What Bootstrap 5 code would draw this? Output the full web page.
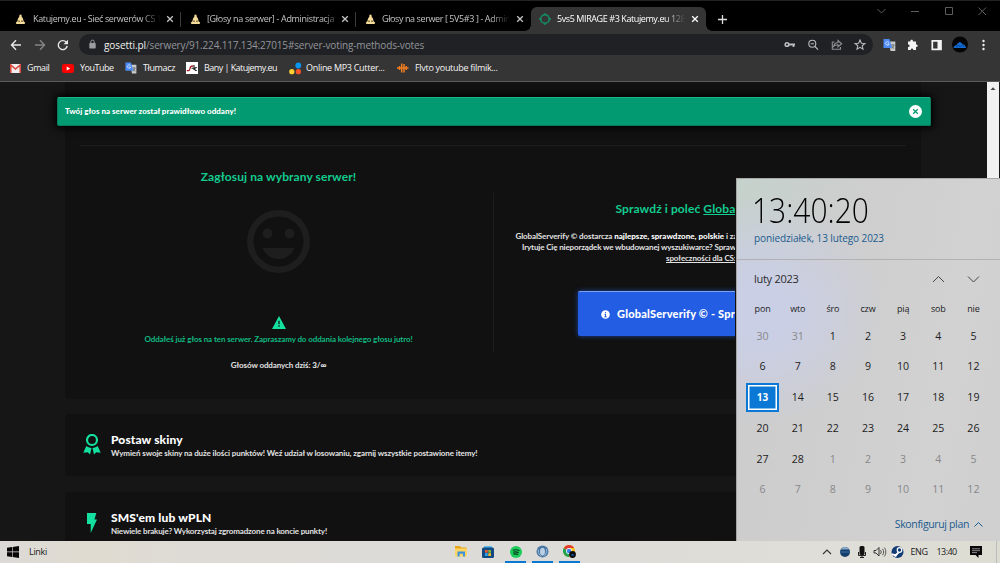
<!DOCTYPE html>
<html lang="pl">
<head>
<meta charset="utf-8">
<meta name="viewport" content="width=device-width, initial-scale=1">
<title>5vs5 MIRAGE #3 Katujemy.eu</title>
<link href="https://cdn.jsdelivr.net/npm/bootstrap@5.3.0/dist/css/bootstrap.min.css" rel="stylesheet">
<script src="https://cdn.jsdelivr.net/npm/bootstrap@5.3.0/dist/js/bootstrap.bundle.min.js"></script>
<style>
body{width:1000px;height:563px;overflow:hidden;background:#161616;font:9px/12px "Open Sans","Noto Sans",sans-serif;color:#ddd;white-space:nowrap}
svg{display:block;flex:none}
/* browser chrome */
.tabstrip{height:31px;background:#000;border-top:1px solid #222;padding-top:6px;padding-left:6px}
.b-tab{width:175px;height:24px;padding:0 7px 0 9px;color:#c4c4c4;position:relative}
.b-tab .ttl{flex:1;margin-left:6px;overflow:hidden;letter-spacing:-.36px;-webkit-mask-image:linear-gradient(90deg,#000 108px,transparent 128px)}
.b-tab .ttl.late{-webkit-mask-image:linear-gradient(90deg,#000 116px,transparent 134px)}
.b-tab.sep::after{content:"";position:absolute;right:0;top:5px;width:1px;height:15px;background:#3a3a3a}
.b-tab.on{background:#353535;color:#fff;border-radius:6px 6px 0 0;padding-left:8px}
.b-tab.on::before,.b-tab.on::after{content:"";position:absolute;bottom:0;width:6px;height:6px}
.b-tab.on::before{left:-6px;background:radial-gradient(circle at 0 0,#000 5.5px,#353535 6px)}
.b-tab.on::after{right:-6px;background:radial-gradient(circle at 100% 0,#000 5.5px,#353535 6px)}
.toolbar{height:27px;background:#353535;padding:3px 0 3px 10px}
.omnibox{width:794px;height:21px;margin-left:10px;border-radius:11px;background:#202124;font-size:10px;color:#92959a;padding:0 6px 0 9px}
.host{color:#f1f1f1;letter-spacing:-.075px;margin-left:7px}
.urlpath{letter-spacing:-.151px}
.bookmarks{height:24px;background:#353535;border-bottom:1px solid #5a5a5a;padding-left:10px;color:#f4f4f4}
.bookmarks>div{gap:6px;height:20px}
/* page */
.site{height:459px;background:#161616;overflow:hidden;font-family:Lato,"Noto Sans",sans-serif;font-size:8px;font-weight:700;position:relative}
.wrap{width:856px;margin-left:65px}
.panel{background:#111}
.main-panel{height:317px;padding:63px 15px 0;border-radius:0 0 4px 4px}
.rule{height:1px;background:#1e1e1e}
.col-vote{width:429px;margin-left:-16px}
.col-promo{height:160px;margin-top:47px;border-left:1px solid #1d1d1d;width:242px;overflow:hidden}
.accent{color:#13cc8f}
.ttl-lg{font-size:12px;line-height:16px;letter-spacing:.1px}
.txt{letter-spacing:-.1px;line-height:11px;color:#e2e2e2}
.promo-btn{width:258px;height:45px;margin:27px 0 0 84px;border:0;border-top:1px solid #7d9ff0;border-radius:2px;background:#235de4;box-shadow:0 0 5px #235de4aa;color:#fff;font-size:11px;font-weight:900;letter-spacing:.2px;padding-left:23px;gap:7px}
.toastbar{position:absolute;left:57px;top:15px;width:873.5px;height:28.5px;background:#029a70;border:1px solid #087d5c;border-top-color:#19b488;border-radius:2px;box-shadow:0 0 9px 2px #000;color:#fff;font-weight:900;letter-spacing:.025px;padding:0 8px 0 7px}
.offer{height:62px;border-radius:4px;padding-left:46px;padding-top:17px;position:relative}
.offer+.offer{margin-top:15px}
.offer svg{position:absolute}
.offer b{display:block;font-size:12px;line-height:17px;letter-spacing:.1px;color:#fff}
.scrollbar{position:absolute;right:1px;top:0;width:12px;height:459px;background:#f1f1f1}
/* taskbar */
.taskbar{height:22px;background:linear-gradient(90deg,#dcdad7,#e0dbd0 9%,#dedbd6 18%,#dcdbd7 50%,#dfded8 85%,#dcdcd2);color:#1a1a1a;position:relative}
.app{width:27px;height:22px;padding-bottom:1px}
.app.run{background:linear-gradient(#0a78d0,#0a78d0) center bottom/21px 2px no-repeat}
.tray{position:absolute;left:822px;top:0;height:22px;width:178px}
/* clock flyout */
.flyout{position:absolute;left:736px;top:178px;width:264px;height:363px;color:#1c1c1c;border-left:1px solid #a5a5a5;border-top:1px solid #aaa;background:radial-gradient(ellipse 125px 115px at 22px 132px,#cacfe5 25%,#cacfe200 100%),radial-gradient(ellipse 130px 130px at 0 0,#c5d2cc,#cad1cd00 100%),linear-gradient(100deg,#cccccd,#cfcfcf 50%,#d2d2d2 75%,#cfcfd0)}
.bigclock{font-size:34px;font-weight:300;line-height:38px;color:#000;transform:scaleX(.881);transform-origin:0 0;margin:12px 0 0 15px}
.days{display:grid;grid-template-columns:repeat(7,35.15px);margin-left:8px;text-align:center}
.days div{height:30.8px;line-height:30.8px;font-size:10.6px}
.days .wd{height:25px;line-height:25px;font-size:9px;letter-spacing:-.15px}
.days .off{color:#87878a}
.days .today{margin:1px 1.2px;height:28.5px;line-height:22.5px;border:2px solid #0a78d4;background:#0a78d4;box-shadow:inset 0 0 0 1.5px #fff;color:#fff;font-weight:700;font-size:10px;padding-top:1px}
.blue{color:#1b5b8e}
</style>
</head>
<body>
<svg width="0" height="0" style="position:absolute">
 <defs>
  <symbol id="close" viewBox="0 0 8 8"><path d="M1.2 1.2l5.6 5.6M6.8 1.2L1.2 6.8" stroke="currentColor" stroke-width="1.3"/></symbol>
  <symbol id="bell" viewBox="0 0 10 10"><path d="M5 .5C6 .5 6.200 1.800 6.100 2.800 7.300 3.800 7.500 5 7.700 6.300L9.300 8 8.700 9.200H1.300L.7 8 2.300 6.300C2.500 5 2.700 3.800 3.900 2.800 3.800 1.800 4 .5 5 .5z" fill="#f5dc9a"/><path d="M3.100 6h1.100v1.300H3.100zM5.800 6h1.100v1.300H5.800z" fill="#4a3a1c"/></symbol>
  <symbol id="translate" viewBox="0 0 13 13"><path d="M6 3h6.300v9.500H7.500z" fill="#c8cacc"/><path d="M8 6.500h3.500M9.800 5.500v1M11 6.500c-.4 2-1.500 3-2.500 3.500M8.800 7.500c.6 1.300 1.500 2 2.500 2.500" stroke="#666" stroke-width=".8" fill="none"/><path d="M.5.500h6L9 9.500H.5z" fill="#4c8bf5"/><path d="M6 4a1.800 1.800 0 1 0 .2 1.400H4.500" stroke="#dbe7ff" stroke-width=".9" fill="none"/></symbol>
 </defs>
</svg>
<div class="d-flex flex-column">
 <header>
  <div class="tabstrip d-flex position-relative">
   <div class="b-tab sep d-flex align-items-center"><svg width="11" height="11"><use href="#bell"/></svg><span class="ttl" style="letter-spacing:-.363px;margin-left:7px">Katujemy.eu - Sieć serwerów CS 1</span><svg width="8" height="8"><use href="#close"/></svg></div>
   <div class="b-tab sep d-flex align-items-center"><svg width="11" height="11"><use href="#bell"/></svg><span class="ttl late" style="letter-spacing:-.32px">[Głosy na serwer] - Administracja</span><svg width="8" height="8"><use href="#close"/></svg></div>
   <div class="b-tab d-flex align-items-center"><svg width="11" height="11"><use href="#bell"/></svg><span class="ttl" style="letter-spacing:-.4px">Głosy na serwer [ 5V5#3 ] - Admin</span><svg width="8" height="8"><use href="#close"/></svg></div>
   <div class="b-tab on d-flex align-items-center"><svg width="12" height="12" viewBox="0 0 12 12"><circle cx="6" cy="6" r="4.300" fill="none" stroke="#129068" stroke-width="1.500"/><path d="M6 0v2.300M6 9.700V12M0 6h2.300M9.700 6H12" stroke="#129068" stroke-width="1.300"/></svg><span class="ttl" style="letter-spacing:-.41px">5vs5 MIRAGE #3 Katujemy.eu 128</span><svg width="8" height="8"><use href="#close"/></svg></div>
   <svg width="9" height="9" viewBox="0 0 9 9" style="margin:8px 0 0 12px"><path d="M4.500 0v9M0 4.500h9" stroke="#ddd" stroke-width="1.300"/></svg>
   <svg class="position-absolute end-0 top-0" width="130" height="22" viewBox="870 1 130 22" fill="none" stroke="#5d5d5d"><path d="M877.500 9l4 4 4-4M911 11.500h8M945.500 7.500h7v7h-7zM978.500 7.500l7.500 7.500M986 7.500l-7.500 7.500"/></svg>
  </div>
  <div class="toolbar d-flex align-items-center">
   <svg width="59" height="14" viewBox="10 38 59 14" fill="none" stroke="#e8e8e8" stroke-width="1.400"><path d="M21 45h-9.500M16 40.300L11.500 45l4.500 4.700"/><path d="M35 45h9.500M40 40.300l4.500 4.700-4.500 4.700" stroke="#858585"/><path d="M66.300 42.300A4.500 4.500 0 1 0 67.200 46"/><path d="M68 39.700v4.500h-4.500z" fill="#e8e8e8" stroke="none"/></svg>
   <div class="omnibox d-flex align-items-center">
    <svg width="9" height="11" viewBox="0 0 9 11"><rect x="1.300" y="4" width="6.400" height="5.500" rx=".7" fill="#9a9da2"/><path d="M2.800 4V2.800a1.700 1.700 0 0 1 3.400 0V4" fill="none" stroke="#9a9da2"/></svg>
    <span class="host">gosetti.pl</span><span class="urlpath">/serwery/91.224.117.134:27015#server-voting-methods-votes</span>
    <svg class="ms-auto" width="84" height="14" viewBox="783 38 84 14" fill="none" stroke="#b9bbbf" stroke-width="1.100"><circle cx="787" cy="44.500" r="1.800" stroke-width="1.600"/><path d="M789 44.500h6M793.500 45v2" stroke-width="1.800"/><circle cx="812.300" cy="43.800" r="3.500"/><path d="M815 46.500l3 3.200M810.700 43.800h3.200"/><path d="M834.500 42h-2.200v7.300h8.200V47M833.500 46.500c.5-2.500 2-3.700 4.500-4v-2l3.700 3.300-3.700 3v-2c-2 0-3.300.4-4.500 1.700z" stroke="#8e9095"/><path d="M860 40l1.400 3.200 3.500.3-2.700 2.300.8 3.400-3-1.800-3 1.800.8-3.400-2.700-2.300 3.500-.3z"/></svg>
   </div>
   <svg width="127" height="21" viewBox="873 34 127 21"><svg x="883" y="38.500" width="13" height="13"><use href="#translate"/></svg><path d="M908 41.500h2.300c-.3-2.300 3-2.300 2.700 0h3v3c2.300-.3 2.300 2.700 0 2.400v3.200h-2.700c0-2.200-2.600-2.200-2.600 0H908v-3c2.200 0 2.200-2.600 0-2.600z" fill="#f4f4f4"/><path d="M932.300 40.800h8.500v8.500h-8.500z" fill="none" stroke="#f4f4f4" stroke-width="1.700"/><path d="M937.500 40h4v10h-4z" fill="#f4f4f4"/><circle cx="960" cy="44.500" r="8" fill="#050505"/><path d="M953.500 48c.3-2 2-2.700 3-3 .5-1.500 2-2.200 3.500-3 1.300.5 1.700 1.200 2.500 2 1.800.5 3.200 1.500 3.700 4z" fill="#126ad2"/><path d="M956 46.500l2.500-1 2 1 2-1.500 2 1.500" stroke="#073a80" fill="none" stroke-width=".8"/><circle cx="983.500" cy="41" r="1.200" fill="#eee"/><circle cx="983.500" cy="45" r="1.200" fill="#eee"/><circle cx="983.500" cy="49" r="1.200" fill="#eee"/></svg>
  </div>
  <div class="bookmarks d-flex">
   <div class="d-flex align-items-center" style="width:52px;letter-spacing:-.384px"><svg width="11" height="9" viewBox="0 0 11 9"><path d="M0 0h11v9H0z" fill="#f3eeee"/><path d="M.8 9V1l4.700 4 4.700-4v8" fill="none" stroke="#d8453a" stroke-width="1.500"/></svg>Gmail</div>
   <div class="d-flex align-items-center" style="width:63px;letter-spacing:-.5px"><svg width="12" height="9" viewBox="0 0 12 9"><rect width="12" height="9" rx="2.200" fill="#f00"/><path d="M4.700 2.500v4l3.500-2z" fill="#fff"/></svg>YouTube</div>
   <div class="d-flex align-items-center" style="width:61px;letter-spacing:-.375px"><svg width="12" height="12"><use href="#translate"/></svg>Tłumacz</div>
   <div class="d-flex align-items-center" style="width:102px;letter-spacing:-.545px"><svg width="12" height="12" viewBox="0 0 12 12"><path d="M0 0h12v12H0z" fill="#fff"/><path d="M.8 8.700h2c1.700 0 .7-3 2-4.200.5-.5 1.500-.5 2.400-.5" fill="none" stroke="#a51b22" stroke-width="1.300"/><path d="M8 3v5M10.800 5.700c-2.500-1-2.800 3.300 0 2.800M5.500 6.200H9" fill="none" stroke="#222" stroke-width="1.100"/></svg>Bany | Katujemy.eu</div>
   <div class="d-flex align-items-center" style="width:108px;letter-spacing:-.295px"><svg width="13" height="13" viewBox="0 0 13 13" style="margin-left:1px;margin-right:-2px"><circle cx="9.300" cy="3.500" r="2.900" fill="#0a95f0"/><circle cx="2.800" cy="9.700" r="2.600" fill="#fdd02f"/><circle cx="9.400" cy="9.700" r="2.600" fill="#f5542b"/></svg>Online MP3 Cutter...</div>
   <div class="d-flex align-items-center" style="letter-spacing:-.302px"><svg width="12" height="12" viewBox="0 0 12 12" style="margin-left:1px"><path d="M2.500 4v4M4.700 1.500v9M7 2v8.500M9.200 4v4M0 6h11.500" stroke="#ee7d22" stroke-width="1.500"/></svg>Flvto youtube filmik...</div>
  </div>
 </header>

 <main class="site">
  <div class="wrap">
   <section class="panel main-panel">
    <div class="rule"></div>
    <div class="d-flex">
     <div class="col-vote text-center d-flex flex-column align-items-center">
      <div class="ttl-lg accent" style="margin-top:23px">Zagłosuj na wybrany serwer!</div>
      <svg width="63" height="63" viewBox="0 0 63 63" style="margin-top:25px"><circle cx="31.500" cy="31.500" r="28.200" fill="none" stroke="#1e1e1e" stroke-width="6.400"/><circle cx="20.500" cy="23.500" r="4.900" fill="#1e1e1e"/><circle cx="42.500" cy="23.500" r="4.900" fill="#1e1e1e"/><path d="M15.500 38h32c-2.500 6.500-8.500 11-16 11s-13.500-4.500-16-11z" fill="#1e1e1e"/></svg>
      <svg width="14" height="13" viewBox="0 0 14 13" style="margin-top:43px"><path d="M7 0l7 13H0z" fill="#14e0a0"/><path d="M7 4.800v3.400M7 9.300v1.500" stroke="#0c3325" stroke-width="1.500"/></svg>
      <div class="txt" style="color:#10b982;margin-top:5px">Oddałeś już głos na ten serwer. Zapraszamy do oddania kolejnego głosu jutro!</div>
      <div class="txt" style="margin-top:15px">Głosów oddanych dziś: <b style="font-weight:900">3/∞</b></div>
     </div>
     <div class="col-promo">
      <div class="ttl-lg accent" style="margin:8px 0 0 121.500px">Sprawdź i poleć <u>Globa</u></div>
      <div class="txt" style="margin:14px 0 0 21.500px">GlobalServerify © dostarcza <b style="font-weight:900;letter-spacing:.02px;color:#fff">najlepsze, sprawdzone, polskie</b> i za</div>
      <div class="txt" style="margin-left:28px;letter-spacing:-.138px">Irytuje Cię nieporządek we wbudowanej wyszukiwarce? Spraw</div>
      <div class="txt" style="margin-left:172px"><u>społeczności dla CS:</u></div>
      <div class="promo-btn d-flex align-items-center"><svg width="9" height="9" viewBox="0 0 9 9"><circle cx="4.500" cy="4.500" r="4.300" fill="#fff"/><path d="M4.500 2v1.200M4.500 4v3M3.500 4.300h1M3.300 6.800h2.400" stroke="#235de4" stroke-width="1"/></svg><span>GlobalServerify © - Spr</span></div>
     </div>
    </div>
   </section>
   <section class="panel offer" style="margin-top:15px">
    <svg width="18" height="21" viewBox="0 0 18 21" style="left:18px;top:20px"><circle cx="9" cy="6" r="5" fill="none" stroke="#14e0a0" stroke-width="2.200"/><path d="M3.300 12c1.500 1.200 3 1.700 5.200 1.900L7 20.500l-2.200-2.200L.3 18.800zM14.700 12c-1.500 1.200-3 1.700-5.200 1.900l1.500 6.600 2.200-2.200 4.500.5z" fill="#14e0a0"/></svg>
    <b>Postaw skiny</b><div class="txt">Wymień swoje skiny na duże ilości punktów! Weź udział w losowaniu, zgarnij wszystkie postawione itemy!</div>
   </section>
   <section class="panel offer" style="margin-top:15.500px">
    <svg width="10" height="20" viewBox="0 0 10 20" style="left:22px;top:21px"><path d="M0 0h9.300L7.500 6.500H10L3.700 20V11H0z" fill="#14e0a0"/></svg>
    <b style="letter-spacing:.145px">SMS'em lub wPLN</b><div class="txt" style="letter-spacing:-.143px">Niewiele brakuje? Wykorzystaj zgromadzone na koncie punkty!</div>
   </section>
  </div>
  <div class="toastbar d-flex align-items-center justify-content-between"><span>Twój głos na serwer został prawidłowo oddany!</span><svg width="13" height="13" viewBox="0 0 13 13"><circle cx="6.500" cy="6.500" r="6.500" fill="#fff"/><path d="M4.200 4.200l4.600 4.600M8.800 4.200L4.200 8.800" stroke="#079a70" stroke-width="1.300"/></svg></div>
  <div class="scrollbar"><svg width="12" height="12" viewBox="0 0 12 12"><path d="M3.500 8L6 5.300 8.500 8z" fill="#444"/></svg></div>
 </main>

 <footer class="taskbar d-flex align-items-center">
  <svg width="12" height="12" viewBox="0 0 12 12" style="margin-left:7px"><path d="M0 1.700L5 1v4.600H0zM5.600.9L12 0v5.600H5.600zM0 6.300h5V11L0 10.300zM5.600 6.300H12V12l-6.400-.9z" fill="#080808"/></svg>
  <span style="margin-left:10px;letter-spacing:-.3px">Linki</span>
  <div class="d-flex position-absolute top-0" style="left:447.500px">
   <div class="app d-flex align-items-center justify-content-center"><svg width="12" height="11" viewBox="0 0 12 11"><path d="M0 0h5l1 1.500h5.500V10H0z" fill="#e8a719"/><path d="M0 2.500h12v8H0z" fill="#fbd566"/><path d="M2.500 10.500V5.500h7.500v5H8V7.800H4.600v2.700z" fill="#3b93dc"/></svg></div>
   <div class="app d-flex align-items-center justify-content-center"><svg width="12" height="12" viewBox="0 0 12 12"><rect x="2" width="8" height="3" rx="1" fill="#56b9e8"/><rect y="1.500" width="12" height="10.500" rx="1.500" fill="#144a83"/><path d="M3 4h2.700v2.700H3z" fill="#ef5a30"/><path d="M6.300 4H9v2.700H6.300z" fill="#7fba3a"/><path d="M3 7.200h2.700V10H3z" fill="#28a8ea"/><path d="M6.300 7.200H9V10H6.300z" fill="#f8b825"/></svg></div>
   <div class="app run d-flex align-items-center justify-content-center" style="margin-left:.5px"><svg width="12" height="12" viewBox="0 0 12 12"><circle cx="6" cy="6" r="6" fill="#1dce5c"/><path d="M2.800 4.200c2.200-.7 4.600-.5 6.600.5M3.100 6.200c2-.5 3.900-.3 5.600.5M3.400 8.100c1.700-.4 3.200-.2 4.700.5" fill="none" stroke="#0c3a1d" stroke-width="1.100"/></svg></div>
   <div class="app run d-flex align-items-center justify-content-center"><svg width="13" height="13" viewBox="0 0 13 13"><circle cx="6.500" cy="6.500" r="6" fill="#4d7ba8"/><ellipse cx="6.500" cy="6.700" rx="3" ry="4.300" fill="#b7d0e6" stroke="#3f6c98"/><path d="M2.300 4.500c0 4 1 5.500 3 7M10.500 4c.5 3-.5 5.500-2.500 7.500" fill="none" stroke="#a9c2da" stroke-width=".8"/></svg></div>
   <div class="app run d-flex align-items-center justify-content-center"><svg width="13" height="13" viewBox="0 0 13 13"><circle cx="6" cy="6" r="6" fill="#fbc116"/><path d="M6 6v6A6 6 0 0 1 .8 3z" fill="#23a455"/><path d="M.8 3A6 6 0 0 1 11.200 3H6v3z" fill="#e33b2e"/><circle cx="6" cy="6" r="2.900" fill="#fff"/><circle cx="6" cy="6" r="2.200" fill="#3d7ff0"/><circle cx="9.500" cy="9.500" r="3.400" fill="#0a0a0a"/><path d="M7.500 10.500l2-1.800 2 1.800z" fill="#1669c8"/></svg></div>
  </div>
  <div class="tray d-flex align-items-center">
   <svg width="84" height="16" viewBox="822 544 84 16"><path d="M823 554l4-4 4 4" fill="none" stroke="#333" stroke-width="1.100"/><circle cx="845" cy="552" r="5" fill="#173e68"/><path d="M840.500 549.500a5 5 0 0 1 9 0z" fill="#86a9c8"/><path d="M840.500 552h9" stroke="#3977a9"/><rect x="859.500" y="546" width="5" height="9" rx="1.500" fill="#111"/><path d="M858.500 552v3.500h7V552M862 555v2.500M860 557.500h4" fill="none" stroke="#222"/><path d="M874 550.500h2l3-3v8.500l-3-3h-2z" fill="none" stroke="#222" stroke-width=".9"/><path d="M880.500 550c.8 1.200.8 2.700 0 4M882.500 548.800c1.500 2 1.500 4.400 0 6.400M884.300 547.500c2 2.700 2 6.200 0 9" fill="none" stroke="#333" stroke-width=".8"/><circle cx="897.500" cy="552" r="6" fill="#123c73"/><path d="M892 554l3.500 1.500 3-3" fill="none" stroke="#fff" stroke-width="1.800"/><circle cx="899.500" cy="550" r="2.300" fill="none" stroke="#fff" stroke-width="1.200"/><circle cx="895.300" cy="555.300" r="1.500" fill="#fff"/></svg>
   <span style="margin-left:4.500px;letter-spacing:-.44px">ENG</span><span style="margin-left:9px;letter-spacing:-.59px">13:40</span>
   <svg width="12" height="12" viewBox="0 0 12 12" style="margin-left:13px"><path d="M0 0h12v9H8.500v3L5.500 9H0z" fill="#080808"/><path d="M2 2.800h8M2 4.700h8M2 6.600h5" stroke="#aaa" stroke-width=".8"/></svg>
   <span style="margin-left:14px;width:1px;height:22px;background:#bbb"></span>
  </div>
 </footer>
</div>

<aside class="flyout">
 <div class="bigclock">13:40:20</div>
 <div class="blue" style="font-size:10px;line-height:14px;letter-spacing:-.095px;margin:2px 0 0 17px">poniedziałek, 13 lutego 2023</div>
 <div style="height:1px;background:#b2b2b3;margin-top:13.500px"></div>
 <div class="d-flex align-items-center" style="height:38px;padding-left:17px;font-size:11px;letter-spacing:-.276px;color:#2b2b2b">luty 2023<svg class="ms-auto" width="48" height="8" viewBox="0 0 48 8" style="margin-right:20px" fill="none" stroke="#444"><path d="M1 7l5.500-5.500L12 7M36 1.500L41.500 7 47 1.500"/></svg></div>
 <div class="days" id="days" style="margin-top:-2px"></div>
 <div class="blue d-flex align-items-center" style="position:absolute;right:17px;top:337px;font-size:10.500px;letter-spacing:-.35px;line-height:16px">Skonfiguruj plan<svg width="9" height="6" viewBox="0 0 9 6" style="margin-left:5px" fill="none" stroke="#1b5b8e"><path d="M.5 5.500l4-4 4 4"/></svg></div>
</aside>
<script>
const grid=document.getElementById('days');
const add=(text,cls)=>{const d=document.createElement('div');d.textContent=text;d.className=cls;grid.append(d)};
['pon','wto','śro','czw','pią','sob','nie'].forEach(d=>add(d,'wd'));
[30,31].forEach(d=>add(d,'off'));
for(let d=1;d<=28;d++)add(d,d===13?'today':'');
for(let d=1;d<=12;d++)add(d,'off');
</script>
</body>
</html>
